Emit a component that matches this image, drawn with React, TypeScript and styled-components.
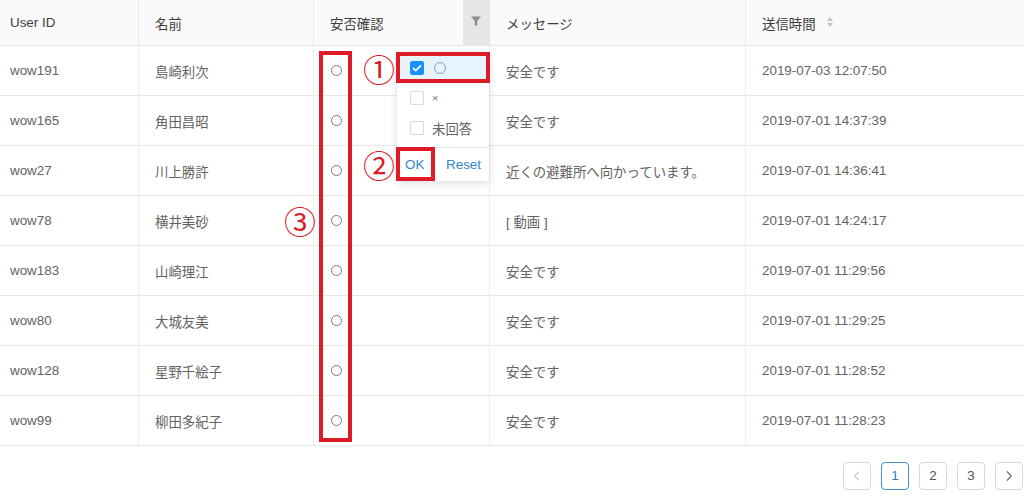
import styled, { createGlobalStyle } from 'styled-components'

const GlobalStyle = createGlobalStyle`
  html, body {
    margin: 0;
    padding: 0;
    background: #fff;
  }
  body {
    font-family: "Liberation Sans", "Noto Sans CJK JP", sans-serif;
  }
  * { box-sizing: border-box; }
`

const rows = [
  { id: 'wow191', name: '島崎利次', msg: '安全です', time: '2019-07-03 12:07:50' },
  { id: 'wow165', name: '角田昌昭', msg: '安全です', time: '2019-07-01 14:37:39' },
  { id: 'wow27', name: '川上勝許', msg: '近くの避難所へ向かっています。', time: '2019-07-01 14:36:41' },
  { id: 'wow78', name: '横井美砂', msg: '[ 動画 ]', time: '2019-07-01 14:24:17' },
  { id: 'wow183', name: '山崎理江', msg: '安全です', time: '2019-07-01 11:29:56' },
  { id: 'wow80', name: '大城友美', msg: '安全です', time: '2019-07-01 11:29:25' },
  { id: 'wow128', name: '星野千絵子', msg: '安全です', time: '2019-07-01 11:28:52' },
  { id: 'wow99', name: '柳田多紀子', msg: '安全です', time: '2019-07-01 11:28:23' },
]

const Chevron = ({ dir, color }: { dir: 'left' | 'right'; color: string }) => (
  <svg width="8" height="12" viewBox="0 0 8 12">
    <path
      d={dir === 'left' ? 'M6 1.5L1.8 6L6 10.5' : 'M2 1.5L6.2 6L2 10.5'}
      stroke={color}
      strokeWidth="1.1"
      fill="none"
    />
  </svg>
)

const App = () => {
  return (
    <Page>
      <GlobalStyle />
      <HeaderRow>
        <HeadCell $first>User ID</HeadCell>
        <HeadCell>名前</HeadCell>
        <HeadCell>
          安否確認
          <FilterTrigger>
            <svg width="10" height="10" viewBox="0 0 10 10">
              <path d="M0 0.5h10L6.2 5V9.5H3.8V5z" fill="#8c8c8c" />
            </svg>
          </FilterTrigger>
        </HeadCell>
        <HeadCell>メッセージ</HeadCell>
        <HeadCell>
          送信時間
          <SortIcon width="8" height="12" viewBox="0 0 8 12">
            <path d="M4 1L7 5H1z" fill="#c4c4c4" />
            <path d="M1 7H7L4 11z" fill="#c4c4c4" />
          </SortIcon>
        </HeadCell>
      </HeaderRow>

      {rows.map((r) => (
        <Row key={r.id}>
          <Cell $first>{r.id}</Cell>
          <Cell>{r.name}</Cell>
          <Cell><Ring /></Cell>
          <Cell>{r.msg}</Cell>
          <Cell>{r.time}</Cell>
        </Row>
      ))}

      <Pager>
        <PageBtn $disabled><Chevron dir="left" color="#c8c8c8" /></PageBtn>
        <PageBtn $active>1</PageBtn>
        <PageBtn>2</PageBtn>
        <PageBtn>3</PageBtn>
        <PageBtn><Chevron dir="right" color="#666" /></PageBtn>
      </Pager>

      <FilterMenu>
        <MenuItem $selected $first>
          <Check $checked>
            <svg width="10" height="8" viewBox="0 0 10 8">
              <path d="M1 4l2.7 2.6L9 1.3" stroke="#fff" strokeWidth="1.8" fill="none" />
            </svg>
          </Check>
          <MenuRing />
        </MenuItem>
        <MenuItem>
          <Check />
          <Small>×</Small>
        </MenuItem>
        <MenuItem>
          <Check />
          未回答
        </MenuItem>
        <MenuFooter>
          <LinkBtn>OK</LinkBtn>
          <LinkBtn>Reset</LinkBtn>
        </MenuFooter>
      </FilterMenu>

      <RedBox $x={319} $y={51} $w={33} $h={391} />
      <RedBox $x={396} $y={52} $w={94} $h={31} />
      <RedBox $x={396} $y={147} $w={39} $h={34} />

      <Badge $x={363} $y={52}>①</Badge>
      <Badge $x={363} $y={148}>②</Badge>
      <Badge $x={284} $y={204}>③</Badge>
    </Page>
  )
}

export default App

const Page = styled.div`
  position: relative;
  width: 1024px;
  height: 496px;
  overflow: hidden;
  font-size: 13.4px;
`

const HeaderRow = styled.div`
  display: grid;
  grid-template-columns: 138px 175px 176px 256px 1fr;
  height: 46px;
  background: #fafafa;
  border-bottom: 1px solid #e8e8e8;
  color: #3e3e3e;
`

const HeadCell = styled.div<{ $first?: boolean }>`
  display: flex;
  align-items: center;
  padding-left: ${(p) => (p.$first ? '10px' : '16px')};
  border-left: ${(p) => (p.$first ? 'none' : '1px solid #e8e8e8')};
`

const FilterTrigger = styled.div`
  margin-left: auto;
  align-self: stretch;
  width: 26px;
  background: #e6e6e6;
  display: flex;
  align-items: center;
  justify-content: center;
  padding-bottom: 4px;
`

const SortIcon = styled.svg`
  margin-left: 10px;
  margin-top: -2px;
`

const Row = styled.div`
  display: grid;
  grid-template-columns: 138px 175px 176px 256px 1fr;
  height: 50px;
  border-bottom: 1px solid #e8e8e8;
  color: #636363;
`

const Cell = styled.div<{ $first?: boolean }>`
  display: flex;
  align-items: center;
  padding-left: ${(p) => (p.$first ? '10px' : '16px')};
  border-left: ${(p) => (p.$first ? 'none' : '1px solid #eeeeee')};
  white-space: nowrap;
`

const Ring = styled.span`
  display: inline-block;
  width: 11px;
  height: 11px;
  border: 1px solid #7a7a7a;
  border-radius: 50%;
  margin-left: 1px;
`

const Pager = styled.div`
  display: flex;
  justify-content: flex-end;
  gap: 10px;
  margin-top: 16px;
  padding-right: 1px;
`

const PageBtn = styled.div<{ $active?: boolean; $disabled?: boolean }>`
  width: 28px;
  height: 28px;
  display: flex;
  align-items: center;
  justify-content: center;
  border: 1px solid ${(p) => (p.$active ? '#4a90c8' : '#d9d9d9')};
  border-radius: 4px;
  color: ${(p) => (p.$active ? '#2f7fc0' : '#555')};
  font-size: 13.4px;
  line-height: 1;
`

const FilterMenu = styled.div`
  position: absolute;
  left: 397px;
  top: 52px;
  width: 92px;
  background: #fff;
  border-radius: 4px;
  box-shadow: 0 2px 8px rgba(0, 0, 0, 0.15);
  display: flex;
  flex-direction: column;
  color: #636363;
`

const MenuItem = styled.div<{ $selected?: boolean; $first?: boolean }>`
  display: flex;
  align-items: center;
  gap: 8px;
  height: ${(p) => (p.$first ? '31px' : '30px')};
  padding-left: 13px;
  background: ${(p) => (p.$selected ? '#e6f4fd' : 'transparent')};
  &:nth-child(3) {
    margin-bottom: 4px;
  }
`

const Check = styled.span<{ $checked?: boolean }>`
  width: 14px;
  height: 14px;
  border-radius: 2px;
  border: 1px solid ${(p) => (p.$checked ? '#1890ff' : '#d9d9d9')};
  background: ${(p) => (p.$checked ? '#1890ff' : '#fff')};
  display: flex;
  align-items: center;
  justify-content: center;
`

const MenuRing = styled.span`
  width: 12px;
  height: 12px;
  border: 1px solid #7f9fc2;
  border-radius: 50%;
  margin-left: 2px;
`

const Small = styled.span`
  font-size: 11px;
  color: #777;
`

const MenuFooter = styled.div`
  display: flex;
  justify-content: space-between;
  align-items: center;
  height: 34px;
  border-top: 1px solid #e8e8e8;
  padding: 0 8px;
`

const LinkBtn = styled.span`
  color: #2f86cc;
  font-size: 13.4px;
`

const RedBox = styled.div<{ $x: number; $y: number; $w: number; $h: number }>`
  position: absolute;
  left: ${(p) => p.$x}px;
  top: ${(p) => p.$y}px;
  width: ${(p) => p.$w}px;
  height: ${(p) => p.$h}px;
  border: 4px solid #dd1c27;
`

const Badge = styled.div<{ $x: number; $y: number }>`
  position: absolute;
  left: ${(p) => p.$x}px;
  top: ${(p) => p.$y}px;
  font-family: "Noto Sans CJK JP", sans-serif;
  font-size: 32px;
  line-height: 32px;
  color: #dd1c27;
`
